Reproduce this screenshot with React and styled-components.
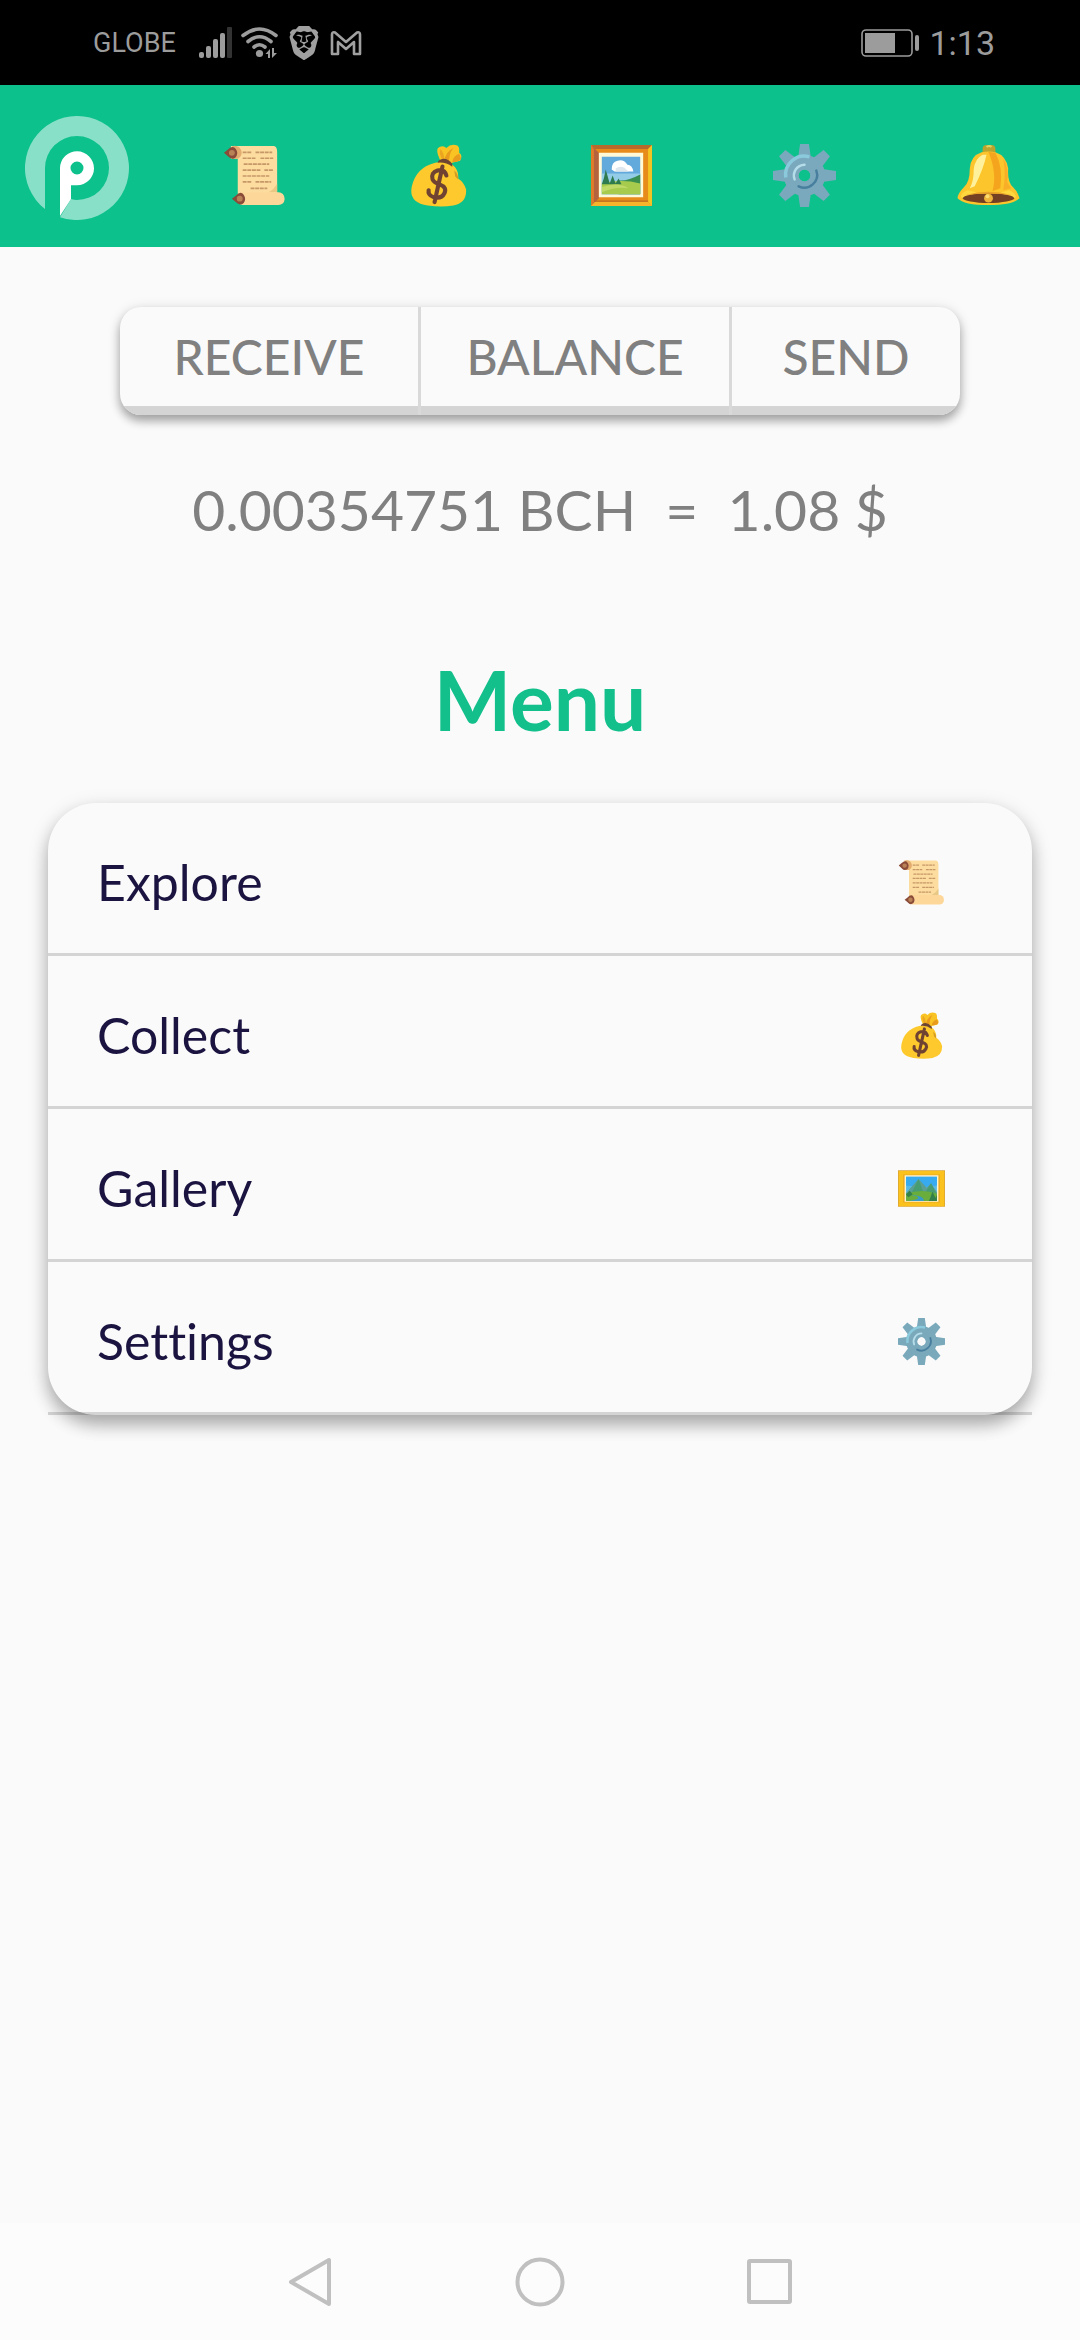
import React from "react";
import styled, { createGlobalStyle } from "styled-components";
import { SiBrave } from "react-icons/si";

const GlobalStyle = createGlobalStyle`
  *, *::before, *::after { box-sizing: border-box; }
  body { margin: 0; background: #fafafa; }
`;

const Screen = styled.div`
  display: flex;
  flex-direction: column;
  min-height: 100vh;
  font-family: Lato, "Noto Sans", sans-serif;
  font-variant-ligatures: none;
`;

/* ---------- status bar ---------- */

const StatusBar = styled.div`
  display: flex;
  align-items: center;
  justify-content: space-between;
  height: 85px;
  padding: 0 85px 0 93px;
  background: #000;
  color: #9c9c9c;
  font-family: Roboto, sans-serif;
`;

const StatusGroup = styled.div`
  display: flex;
  align-items: center;
  gap: 9px;
`;

const Carrier = styled.span`
  margin-right: 14px;
  font-size: 27px;
  line-height: 32px;
`;

const Clock = styled.span`
  font-size: 34px;
  line-height: 40px;
`;

/* ---------- header ---------- */

const Header = styled.header`
  display: flex;
  align-items: center;
  height: 162px;
  background: #0dc18c;
`;

const Brand = styled.a`
  display: block;
  padding: 4px 34px 0 25px;
  svg { display: block; }
`;

const IconNav = styled.nav`
  display: flex;
  flex: 1;
  padding-top: 18px;
`;

const NavLink = styled.a`
  display: flex;
  flex: 1;
  justify-content: center;
`;

/* ---------- content ---------- */

const Content = styled.main`
  display: flex;
  flex: 1;
  flex-direction: column;
  padding: 60px 48px;
`;

const Segments = styled.div`
  display: grid;
  grid-template-columns: 301fr 311fr 228fr;
  margin: 0 72px;
  border-radius: 21px;
  overflow: hidden;
  background: #fafafa;
  box-shadow: 0 6px 10px rgba(0, 0, 0, 0.3), 0 2px 14px rgba(0, 0, 0, 0.12);
`;

const Segment = styled.button`
  height: 108px;
  padding: 0 0 9px;
  border: 0;
  border-right: 3px solid #d9d9d9;
  background: transparent;
  box-shadow: inset 0 -9px 0 #d4d4d4;
  color: #808080;
  font-family: inherit;
  font-size: 48px;
  font-weight: 500;
  &:last-child { border-right: 0; }
`;

const Balance = styled.p`
  margin: 60px 0 0;
  color: #808080;
  font-size: 57px;
  line-height: 68px;
  text-align: center;
  white-space: pre;
`;

const Title = styled.h1`
  margin: 108px 0 0;
  color: #13c08c;
  font-size: 82px;
  font-weight: 700;
  line-height: 96px;
  text-align: center;
`;

const MenuList = styled.ul`
  margin: 56px 0 0;
  padding: 0;
  border-radius: 48px;
  box-shadow: 0 10px 16px rgba(0, 0, 0, 0.24), 0 6px 22px rgba(0, 0, 0, 0.14);
  list-style: none;
`;

const MenuRow = styled.a`
  display: flex;
  align-items: center;
  justify-content: space-between;
  height: 153px;
  padding: 8px 87px 0 49px;
  border-bottom: 3px solid rgba(0, 0, 0, 0.15);
  color: #1b1440;
  font-size: 50px;
  line-height: 56px;
  text-decoration: none;
`;

/* ---------- system navigation ---------- */

const SystemNav = styled.div`
  display: flex;
  align-items: center;
  justify-content: center;
  gap: 180px;
  height: 117px;
  background: #fcfcfc;
`;

const SystemButton = styled.button`
  display: block;
  width: 50px;
  height: 50px;
  padding: 0;
  border: 0;
  background: none;
  svg { display: block; fill: none; stroke: #c0c0c0; stroke-width: 4; stroke-linejoin: round; }
`;

/* ---------- drawings ---------- */

function SignalIcon() {
  return (
    <svg width="33" height="34" viewBox="0 0 33 34" aria-hidden="true">
      <g fill="#9c9c9c">
        <rect x="0" y="26" width="5" height="6" rx="2" />
        <rect x="7" y="20" width="5" height="12" rx="2" />
        <rect x="14" y="13" width="5" height="19" rx="2" />
        <rect x="21" y="7" width="5" height="25" rx="2" />
      </g>
      <rect x="28" y="1" width="5" height="31" rx="1" fill="#333" />
    </svg>
  );
}

function WifiIcon() {
  return (
    <svg width="37" height="34" viewBox="0 0 37 34" aria-hidden="true">
      <g fill="none" stroke="#9c9c9c" strokeWidth="3.6" strokeLinecap="round">
        <path d="M2 9.500Q18.500-3.500 35 9.500" />
        <path d="M7 15.500Q18.500 6 30 15.500" />
        <path d="M13 21Q18.500 16.500 24 21" />
      </g>
      <circle cx="18.500" cy="27.500" r="3.600" fill="#9c9c9c" />
      <path d="M24.500 28L29 23v9h-2v-4zM31 22v10l5-5h-3v-5z" fill="#9c9c9c" />
    </svg>
  );
}

function MailIcon() {
  return (
    <svg width="32" height="26" viewBox="0 0 32 26" aria-hidden="true">
      <path
        d="M2 4.500Q2 1.500 5 2.500L16 12 27 2.500Q30 1.500 30 4.500V24H24V12L16 19 8 12V24H2z"
        fill="none"
        stroke="#a0a0a0"
        strokeWidth="2.600"
        strokeLinejoin="round"
      />
    </svg>
  );
}

function BatteryIcon() {
  return (
    <svg width="59" height="28" viewBox="0 0 59 28" aria-hidden="true">
      <rect x="1" y="1" width="50" height="26" rx="4" fill="none" stroke="#9c9c9c" strokeWidth="1.600" />
      <rect x="4" y="4" width="30" height="20" fill="#9c9c9c" />
      <rect x="54" y="6" width="4" height="16" rx="2" fill="#9c9c9c" />
    </svg>
  );
}

function Logo() {
  return (
    <svg width="104" height="104" viewBox="0 0 104 104" aria-hidden="true">
      <path
        d="M20 92.990V52A32 32 0 0 1 84 52A32 32 0 0 1 52 84Q49 84 46 83L35 101.140A52 52 0 1 0 20 92.990z"
        fill="#89e0c8"
      />
      <path
        fillRule="evenodd"
        d="M35 100V52a17 17 0 1 1 17 17.300H46V83zM52 45.500a6.500 6.500 0 1 0 0 13 6.500 6.500 0 0 0 0-13z"
        fill="#fff"
      />
    </svg>
  );
}

function ScrollIcon({ size }) {
  return (
    <svg width={size} height={size} viewBox="0 0 64 64" aria-hidden="true">
      <path d="M8 2H51Q55 2 55 8V51H15V15H8z" fill="#fddc9f" />
      <path d="M9 2.500a6 6 0 0 1 6 12.500h-6z" fill="#e3ad70" />
      <path d="M1 9l4-3.500Q10 1 13 5t0 8.500Q9 17 5 12.500z" fill="#8a4b38" />
      <circle cx="9" cy="9" r="3" fill="#b98156" />
      <path d="M55 40v9h-9q6-3 9-9z" fill="#e9c784" />
      <rect x="14" y="49" width="48.500" height="13" rx="6" fill="#fdd79a" />
      <path d="M9 55.500l4-3Q18 47 21 51.500t0 8.500Q17 63.500 13 59z" fill="#8a4b38" />
      <circle cx="17" cy="55.500" r="3" fill="#b98156" />
      <path
        d="M20 8.500h9m4 0h17M20 14.500h13m5 0h13M21 20.500h26M20 26.500h18m4 0h9M20 32.500h27M20 38.500h9m4 0h16M28 45h17"
        stroke="#c69868"
        strokeWidth="1.700"
        strokeDasharray="4 .7"
        fill="none"
      />
    </svg>
  );
}

function MoneyBagIcon({ size }) {
  return (
    <svg width={size} height={size} viewBox="0 0 64 64" aria-hidden="true">
      <path d="M34 17Q28 5 33 3q4-2 7 1 4-4 9-3 5 0 4 8 4 3 1 8l-8 2-3 3z" fill="#f9c423" />
      <path d="M38 17Q39 8 47 4q-5 7-4 15zM46 18q1-6 7-8l2 5q-3 4-9 3z" fill="#e99b1d" />
      <path d="M36 16q-4-6-2-11 4 4 4 12z" fill="#eba520" />
      <path d="M34 18Q12 21 6 39-1 59 21 62.500q14 2 26 0Q61 60 60 46 58 39 52 35 53 26 45 20z" fill="#fdc92c" />
      <path d="M48 27q4 3 4 9l-3-3z" fill="#d39b25" />
      <path d="M32 17q7-5 14 3v3q-7-5-15-4z" fill="#6d4532" />
      <path
        d="M40 32Q38 25 31 27q-7 2-5 9 1 3 7 5 8 3 5 9-3 6-11 4-6-2-5-7M36 23L28 59"
        fill="none"
        stroke="#704231"
        strokeWidth="4.200"
        strokeLinecap="round"
      />
    </svg>
  );
}

function SquareFrameIcon({ size }) {
  return (
    <svg width={size} height={size} viewBox="0 0 64 64" aria-hidden="true">
      <path d="M1 1H63V63H1z" fill="#e78b1b" />
      <path d="M1 1H63L59 5H5z" fill="#b76a2b" />
      <path d="M1 1l8 8v46l-8 8z" fill="#b5633e" />
      <path d="M1 1l3 4v54l-3 4z" fill="#de7c2a" />
      <path d="M63 1v62l-4-4V5z" fill="#f4c522" />
      <path d="M1 63l4-4h54l4 4z" fill="#f5b42c" />
      <path d="M5 58h54" stroke="#ae6925" strokeWidth="1" />
      <path d="M9 9h45v45H9z" fill="#fff9d8" />
      <path d="M12 13h39v38H12z" fill="#62a9dc" />
      <path d="M12 30h39v21H12z" fill="#92cce7" />
      <path d="M29 37q9 1 22-6v20H29z" fill="#398e50" />
      <path d="M12 40q20-5 39 0v11H12z" fill="#a7cc4d" />
      <path d="M12 41l2-6 2-9 4 14 3-8 3 8 3-5 3 6z" fill="#2f7b50" />
      <path d="M12 44q16-6 27 1-12-2-27 4z" fill="#bfda68" />
      <path d="M22 26q0-8 6-9 6-2 10 4 5 0 6 7H25z" fill="#fff" />
      <path d="M26 25q4-3 9-1l4 4H26z" fill="#dfe7ee" />
    </svg>
  );
}

function WideFrameIcon({ size }) {
  return (
    <svg width={size} height={size} viewBox="0 0 64 64" aria-hidden="true">
      <path d="M0 7h64v50H0z" fill="#d8a337" />
      <path d="M1 8h62v48H1z" fill="#fbc11c" />
      <path d="M7 13h50v38H7z" fill="#edac20" />
      <path d="M9 14h46v36H9z" fill="#fff5ce" />
      <path d="M11 16h42v33H11z" fill="#58b9e7" />
      <path d="M11 16h42v12q-14 4-42 0z" fill="#37aaf0" />
      <path d="M11 38l17-19 11 12 6-6 8 12v8H11z" fill="#5a9f91" />
      <path d="M28 19l6 17-17 5zM45 25l-9 14 17 2z" fill="#489c72" />
      <path d="M11 39q22-7 42 0v10H11z" fill="#69ad3d" />
      <path d="M14 49q18-2 12-6l-8-2q18 1 17 8z" fill="#399bc6" />
      <path d="M43 47l4-11 4 9 2-4v8H42zM11 40l5-5 4 5-6 4z" fill="#34804b" />
    </svg>
  );
}

const TEETH = [0, 45, 90, 135, 180, 225, 270, 315];

function GearIcon({ size, fill }) {
  return (
    <svg width={size} height={size} viewBox="0 0 64 64" aria-hidden="true">
      <g fill={fill}>
        {TEETH.map((angle) => (
          <path key={angle} d="M27.500 0h9l2 14h-13z" transform={`rotate(${angle} 32 32)`} />
        ))}
        <path fillRule="evenodd" d="M32 11a21 21 0 1 0 0 42 21 21 0 0 0 0-42zm0 15a6 6 0 1 1 0 12 6 6 0 0 1 0-12z" />
      </g>
      <path d="M13 34A19 19 0 0 1 37 13" fill="none" stroke="#8bc9dc" strokeWidth="3.500" />
      <circle cx="32" cy="32" r="9" fill="none" stroke={fill} strokeWidth="6" />
      <path d="M22 36A11 11 0 0 1 32 21" fill="none" stroke="#b5dce9" strokeWidth="2.500" strokeLinecap="round" />
      <path d="M44 27A13 13 0 0 1 26 43" fill="none" stroke="#487f9e" strokeWidth="2.500" strokeLinecap="round" />
    </svg>
  );
}

function BellIcon({ size }) {
  return (
    <svg width={size} height={size} viewBox="0 0 64 64" aria-hidden="true">
      <rect x="26" y="1" width="13" height="12" rx="4" fill="#bba42e" />
      <path d="M30 3q3-2 5 0" fill="none" stroke="#ded45d" strokeWidth="2" />
      <path d="M25 8.500Q14 12 13 25 13 39 7 44 1 50 .5 55 7 62 32 62T63.500 55Q62 49 57 44 51 39 52 25 50 12 39 8.500q-7-2-14 0z" fill="#fcc52c" />
      <path d="M39 9q8 14 5 36l-8 3Q41 30 32 8z" fill="#f4a51d" />
      <path d="M47 15q6 9 4 24l4 6-8 2q3-17 0-32z" fill="#f9ae27" />
      <path d="M26 11Q18 15 17 26q0 12-4 19l5-2Q27 25 30 11z" fill="#fff09b" />
      <path d="M11 47q-7 2-7 7 15 5 28 5t28-5q-1-5-7-7-20 7-42 0z" fill="#ffd73f" />
      <ellipse cx="32" cy="55" rx="26" ry="5" fill="#744023" />
      <path d="M8 52q24-7 48 0-24-3-48 0z" fill="#eaa329" />
      <circle cx="32" cy="55" r="4.500" fill="#edb33a" />
      <circle cx="31" cy="53" r="2" fill="#ffdc70" />
    </svg>
  );
}

const navItems = [
  { label: "Explore", icon: <ScrollIcon size={63} /> },
  { label: "Collect", icon: <MoneyBagIcon size={63} /> },
  { label: "Gallery", icon: <SquareFrameIcon size={63} /> },
  { label: "Settings", icon: <GearIcon size={63} fill="#7aa9bd" /> },
  { label: "Notifications", icon: <BellIcon size={63} /> },
];

const menuItems = [
  { label: "Explore", icon: <ScrollIcon size={47} /> },
  { label: "Collect", icon: <MoneyBagIcon size={47} /> },
  { label: "Gallery", icon: <WideFrameIcon size={47} /> },
  { label: "Settings", icon: <GearIcon size={47} fill="#79a9bb" /> },
];

export default function App() {
  return (
    <Screen>
      <GlobalStyle />
      <StatusBar>
        <StatusGroup>
          <Carrier>GLOBE</Carrier>
          <SignalIcon />
          <WifiIcon />
          <SiBrave size={34} color="#a0a0a0" aria-hidden="true" />
          <MailIcon />
        </StatusGroup>
        <StatusGroup>
          <BatteryIcon />
          <Clock>1:13</Clock>
        </StatusGroup>
      </StatusBar>
      <Header>
        <Brand href="#home" aria-label="Home">
          <Logo />
        </Brand>
        <IconNav>
          {navItems.map((item) => (
            <NavLink key={item.label} href={`#${item.label.toLowerCase()}`} aria-label={item.label}>
              {item.icon}
            </NavLink>
          ))}
        </IconNav>
      </Header>
      <Content>
        <Segments>
          <Segment type="button">RECEIVE</Segment>
          <Segment type="button">BALANCE</Segment>
          <Segment type="button">SEND</Segment>
        </Segments>
        <Balance>{"0.00354751 BCH  =  1.08 $"}</Balance>
        <Title>Menu</Title>
        <MenuList>
          {menuItems.map((item) => (
            <li key={item.label}>
              <MenuRow href={`#${item.label.toLowerCase()}`}>
                {item.label}
                {item.icon}
              </MenuRow>
            </li>
          ))}
        </MenuList>
      </Content>
      <SystemNav>
        <SystemButton type="button" aria-label="Back">
          <svg width="50" height="50" viewBox="0 0 50 50">
            <path d="M44 3V47L6 25z" />
          </svg>
        </SystemButton>
        <SystemButton type="button" aria-label="Home screen">
          <svg width="50" height="50" viewBox="0 0 50 50">
            <circle cx="25" cy="25" r="22.500" />
          </svg>
        </SystemButton>
        <SystemButton type="button" aria-label="Recent apps">
          <svg width="50" height="50" viewBox="0 0 50 50">
            <rect x="4" y="4" width="41" height="41" rx="1" />
          </svg>
        </SystemButton>
      </SystemNav>
    </Screen>
  );
}
